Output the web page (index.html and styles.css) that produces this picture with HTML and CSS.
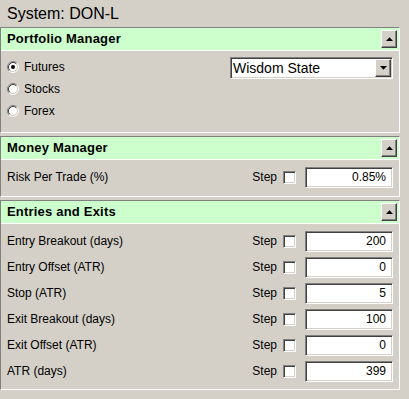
FILE: index.html
```html
<!DOCTYPE html>
<html>
<head>
<meta charset="utf-8">
<link rel="stylesheet" href="styles.css">
</head>
<body>
<div class="title">System: DON-L</div>

<div class="panel">
  <div class="panel-head">
    <span>Portfolio Manager</span>
    <span class="btn"><svg width="7" height="4" viewBox="0 0 7 4"><polygon points="0,4 7,4 3.5,0.3" fill="#000"/></svg></span>
  </div>
  <div class="pm-body">
    <div class="radios">
      <div class="radio-row">
        <svg class="radio" width="12" height="12" viewBox="0 0 12 12">
          <circle cx="6" cy="6" r="4.5" fill="#fff"/>
          <path d="M2.11 9.89 A5.5 5.5 0 0 1 9.89 2.11" stroke="#808080" fill="none"/>
          <path d="M9.89 2.11 A5.5 5.5 0 0 1 2.11 9.89" stroke="#fff" fill="none"/>
          <path d="M2.82 9.18 A4.5 4.5 0 0 1 9.18 2.82" stroke="#404040" fill="none"/>
          <path d="M9.18 2.82 A4.5 4.5 0 0 1 2.82 9.18" stroke="#d4d0c8" fill="none"/>
          <circle cx="6" cy="6" r="2" fill="#000"/>
        </svg>
        <span>Futures</span>
      </div>
      <div class="radio-row">
        <svg class="radio" width="12" height="12" viewBox="0 0 12 12">
          <circle cx="6" cy="6" r="4.5" fill="#fff"/>
          <path d="M2.11 9.89 A5.5 5.5 0 0 1 9.89 2.11" stroke="#808080" fill="none"/>
          <path d="M9.89 2.11 A5.5 5.5 0 0 1 2.11 9.89" stroke="#fff" fill="none"/>
          <path d="M2.82 9.18 A4.5 4.5 0 0 1 9.18 2.82" stroke="#404040" fill="none"/>
          <path d="M9.18 2.82 A4.5 4.5 0 0 1 2.82 9.18" stroke="#d4d0c8" fill="none"/>
        </svg>
        <span>Stocks</span>
      </div>
      <div class="radio-row">
        <svg class="radio" width="12" height="12" viewBox="0 0 12 12">
          <circle cx="6" cy="6" r="4.5" fill="#fff"/>
          <path d="M2.11 9.89 A5.5 5.5 0 0 1 9.89 2.11" stroke="#808080" fill="none"/>
          <path d="M9.89 2.11 A5.5 5.5 0 0 1 2.11 9.89" stroke="#fff" fill="none"/>
          <path d="M2.82 9.18 A4.5 4.5 0 0 1 9.18 2.82" stroke="#404040" fill="none"/>
          <path d="M9.18 2.82 A4.5 4.5 0 0 1 2.82 9.18" stroke="#d4d0c8" fill="none"/>
        </svg>
        <span>Forex</span>
      </div>
    </div>
    <div class="select">
      <span class="select-text">Wisdom State</span>
      <span class="btn btn-drop"><svg width="7" height="4" viewBox="0 0 7 4"><polygon points="0,0 7,0 3.5,3.7" fill="#000"/></svg></span>
    </div>
  </div>
</div>

<div class="panel">
  <div class="panel-head">
    <span>Money Manager</span>
    <span class="btn"><svg width="7" height="4" viewBox="0 0 7 4"><polygon points="0,4 7,4 3.5,0.3" fill="#000"/></svg></span>
  </div>
  <div class="fields fields-single">
    <div class="field-row">
      <span class="label">Risk Per Trade (%)</span>
      <span class="step">Step</span>
      <span class="check"></span>
      <span class="input">0.85%</span>
    </div>
  </div>
</div>

<div class="panel">
  <div class="panel-head">
    <span>Entries and Exits</span>
    <span class="btn"><svg width="7" height="4" viewBox="0 0 7 4"><polygon points="0,4 7,4 3.5,0.3" fill="#000"/></svg></span>
  </div>
  <div class="fields">
    <div class="field-row">
      <span class="label">Entry Breakout (days)</span>
      <span class="step">Step</span>
      <span class="check"></span>
      <span class="input">200</span>
    </div>
    <div class="field-row">
      <span class="label">Entry Offset (ATR)</span>
      <span class="step">Step</span>
      <span class="check"></span>
      <span class="input">0</span>
    </div>
    <div class="field-row">
      <span class="label">Stop (ATR)</span>
      <span class="step">Step</span>
      <span class="check"></span>
      <span class="input">5</span>
    </div>
    <div class="field-row">
      <span class="label">Exit Breakout (days)</span>
      <span class="step">Step</span>
      <span class="check"></span>
      <span class="input">100</span>
    </div>
    <div class="field-row">
      <span class="label">Exit Offset (ATR)</span>
      <span class="step">Step</span>
      <span class="check"></span>
      <span class="input">0</span>
    </div>
    <div class="field-row">
      <span class="label">ATR (days)</span>
      <span class="step">Step</span>
      <span class="check"></span>
      <span class="input">399</span>
    </div>
  </div>
</div>
</body>
</html>
```

FILE: styles.css
```css
* { box-sizing: border-box; }

html, body {
  margin: 0;
  padding: 0;
  background: #d4d0c8;
}

body {
  width: 409px;
  height: 399px;
  overflow: hidden;
  font-family: "Liberation Sans", Arial, sans-serif;
  font-size: 12px;
  color: #000;
}

.title {
  height: 27px;
  line-height: 27px;
  font-size: 16px;
  padding-left: 7px;
}

.panel {
  width: 400px;
  border-style: solid;
  border-width: 1px;
  border-color: #808080 #fff #fff #808080;
  margin-bottom: 3px;
}

.panel-head {
  height: 23px;
  background: #ccffcc;
  border-bottom: 1px solid #fff;
  display: flex;
  align-items: center;
  justify-content: space-between;
  padding: 0 2px 1px 6px;
  font-size: 13px;
  font-weight: bold;
  letter-spacing: 0.2px;
  line-height: 22px;
}

.btn {
  width: 16px;
  height: 18px;
  background: #d4d0c8;
  border-style: solid;
  border-width: 1px;
  border-color: #fff #404040 #404040 #fff;
  box-shadow: inset -1px -1px #808080;
  display: flex;
  align-items: center;
  justify-content: center;
}

.btn svg { display: block; }

.pm-body {
  height: 81px;
  display: flex;
  align-items: flex-start;
  padding: 5px 6px 0 6px;
}

.radios {
  flex: 1;
  display: flex;
  flex-direction: column;
}

.radio-row {
  height: 22px;
  display: flex;
  align-items: center;
}

.radio {
  display: block;
  margin-right: 5px;
}

.select {
  margin-top: 1px;
  width: 163px;
  height: 22px;
  background: #fff;
  border-style: solid;
  border-width: 1px;
  border-color: #808080 #fff #fff #808080;
  box-shadow: inset 1px 1px #404040, inset -1px -1px #d4d0c8;
  padding: 1px;
  display: flex;
  align-items: center;
}

.select-text {
  flex: 1;
  font-size: 14px;
  padding-left: 1px;
  line-height: 18px;
}

.btn-drop {
  width: 16px;
  height: 18px;
}

.fields {
  padding: 4px 0 5px 0;
}

.fields-single {
  padding-bottom: 6px;
}

.field-row {
  height: 26px;
  display: flex;
  align-items: center;
  padding: 0 6px;
}

.label {
  flex: 1;
}

.step {
  margin-right: 6px;
}

.check {
  width: 13px;
  height: 13px;
  background: #fff;
  border-style: solid;
  border-width: 1px;
  border-color: #808080 #fff #fff #808080;
  box-shadow: inset 1px 1px #404040, inset -1px -1px #d4d0c8;
  margin-right: 9px;
}

.input {
  width: 88px;
  height: 21px;
  background: #fff;
  border-style: solid;
  border-width: 1px;
  border-color: #808080 #fff #fff #808080;
  box-shadow: inset 1px 1px #404040, inset -1px -1px #d4d0c8;
  text-align: right;
  padding-right: 6px;
  line-height: 19px;
}
```
